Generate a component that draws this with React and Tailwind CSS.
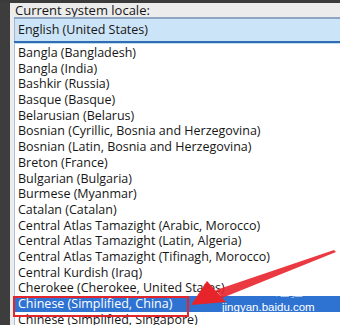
import React from 'react'

const locales = [
  'Bangla (Bangladesh)',
  'Bangla (India)',
  'Bashkir (Russia)',
  'Basque (Basque)',
  'Belarusian (Belarus)',
  'Bosnian (Cyrillic, Bosnia and Herzegovina)',
  'Bosnian (Latin, Bosnia and Herzegovina)',
  'Breton (France)',
  'Bulgarian (Bulgaria)',
  'Burmese (Myanmar)',
  'Catalan (Catalan)',
  'Central Atlas Tamazight (Arabic, Morocco)',
  'Central Atlas Tamazight (Latin, Algeria)',
  'Central Atlas Tamazight (Tifinagh, Morocco)',
  'Central Kurdish (Iraq)',
  'Cherokee (Cherokee, United States)',
  'Chinese (Simplified, China)',
  'Chinese (Simplified, Singapore)',
]

const SELECTED = 'Chinese (Simplified, China)'

export default function App() {
  return (
    <div
      className="relative w-[340px] h-[325px] overflow-hidden bg-[#3b3b3b] text-[12.5px] text-[#161616]"
      style={{ fontFamily: '"Open Sans", "Noto Sans", sans-serif' }}
    >
      <div className="flex h-full pt-[3px]">
        <div className="w-[10px] shrink-0 bg-[#3d3d3d]" />
        <div className="flex-1 flex flex-col bg-[#ececec]">
          <div className="h-[17px] pl-[5px] leading-[14px] text-[13px]">Current system locale:</div>
          <div className="ml-[4px] flex flex-col bg-white">
            <div className="h-[2px] bg-[#8ea6c4]" />
            <div className="h-[22px] bg-[#cce4f7] border-l border-[#9cb6d4] pl-[3px] leading-[22px]">
              English (United States)
            </div>
            <div className="h-[2px] bg-[#2f6db3]" />
            <div className="h-[1px] bg-[#c4dbf2]" />
            <div className="flex flex-col border-l border-[#a9c0da] pt-[1px]">
              {locales.map((name) => (
                <div
                  key={name}
                  className={
                    name === SELECTED
                      ? 'h-[15.7px] shrink-0 pl-[3px] leading-[15.7px] whitespace-nowrap bg-[#2f73d2] text-white'
                      : 'h-[15.7px] shrink-0 pl-[3px] leading-[15.7px] whitespace-nowrap'
                  }
                >
                  {name}
                </div>
              ))}
            </div>
          </div>
        </div>
      </div>

      {/* annotation: red box */}
      <div className="absolute left-[13px] top-[296px] w-[176px] h-[21px] border-2 border-[#e3262b]" />

      {/* watermark */}
      <div className="absolute left-[224px] top-[279px] flex items-end gap-[2px] text-white/60 text-[18px] font-bold leading-none" style={{ fontFamily: '"Liberation Sans", sans-serif' }}>
        <span>Bai</span>
        <span className="text-[14px]">du</span>
        <span className="text-[14px] font-normal ml-[2px]" style={{ fontFamily: '"Noto Sans CJK SC", sans-serif' }}>经验</span>
      </div>
      <div className="absolute left-[222px] top-[300px] text-white text-[11.5px] leading-[14px]" style={{ fontFamily: '"Liberation Sans", sans-serif' }}>
        jingyan.baidu.com
      </div>

      {/* annotation: red arrow */}
      <svg className="absolute left-0 top-0" width="340" height="325" viewBox="0 0 340 325">
        <polygon points="334,250 336,252 222,298 216,290" fill="#e8242b" opacity="0.9" />
        <polygon points="191,305 207,281 226,302" fill="#e8242b" />
      </svg>
    </div>
  )
}
